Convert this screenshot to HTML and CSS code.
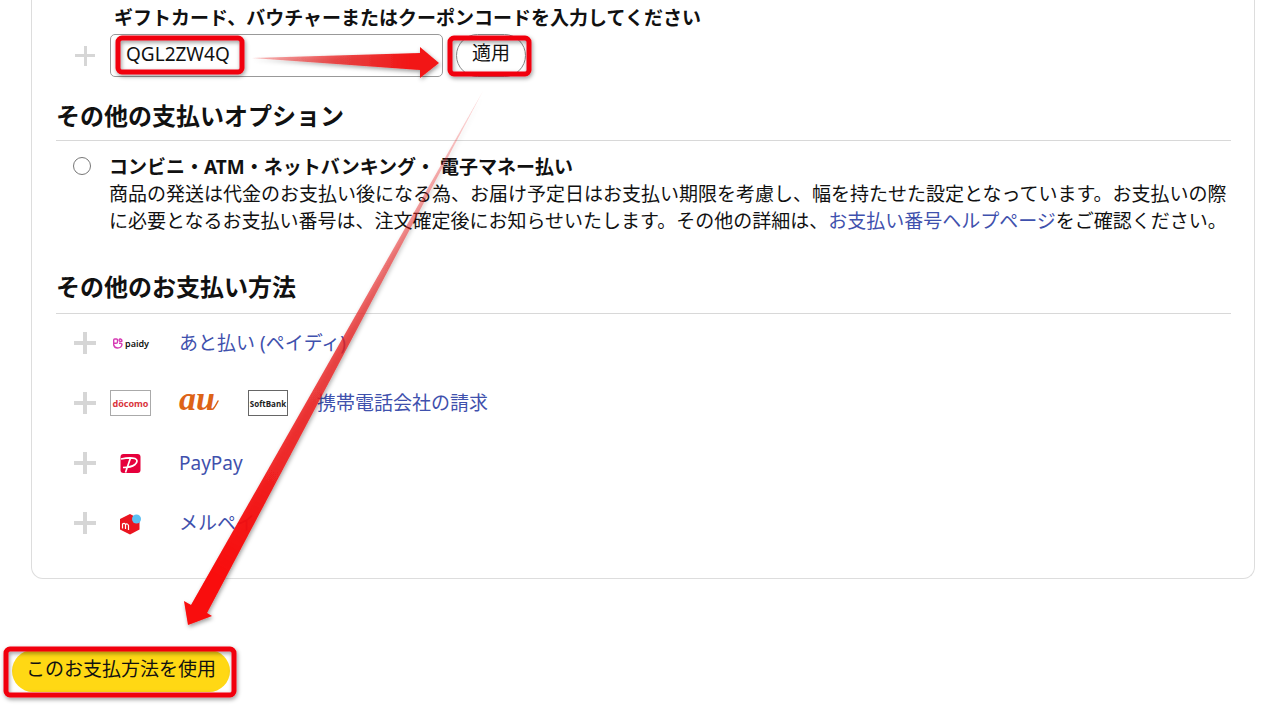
FILE: index.html
```html
<!DOCTYPE html>
<html lang="ja">
<head>
    <meta charset="UTF-8">
    <meta name="viewport" content="width=device-width, initial-scale=1.0">
    <title>お支払い方法</title>
    <link rel="stylesheet" href="styles.css">
</head>
<body>
    <main class="payment-card">
        <form class="gift-form">
            <label class="gift-label" for="gift-code">ギフトカード、バウチャーまたはクーポンコードを入力してください</label>
            <div class="gift-row">
                <span class="plus"></span>
                <input class="gift-input" type="text" id="gift-code" value="QGL2ZW4Q">
                <button class="apply-button" type="button">適用</button>
            </div>
        </form>

        <h2 class="section-title">その他の支払いオプション</h2>
        <div class="option">
            <input class="option-radio" type="radio" id="konbini" name="payment">
            <div class="option-text">
                <label class="option-name" for="konbini">コンビニ・ATM・ネットバンキング・ 電子マネー払い</label>
                <p class="option-desc">商品の発送は代金のお支払い後になる為、お届け予定日はお支払い期限を考慮し、幅を持たせた設定となっています。お支払いの際に必要となるお支払い番号は、注文確定後にお知らせいたします。その他の詳細は、<a href="#">お支払い番号ヘルプページ</a>をご確認ください。</p>
            </div>
        </div>

        <h2 class="section-title methods-title">その他のお支払い方法</h2>
        <ul class="methods">
            <li class="method">
                <span class="plus"></span>
                <svg class="logo" viewBox="0 0 41 26">
                    <g fill="none" stroke="#d63bb4" stroke-width="1.4">
                        <path d="M3.700 13V10Q3.700 9 4.700 9H6.500Q7.500 9 7.500 10V12Q7.500 13.300 6 13.300H3.700V15Q4.500 18 7.500 18Q11.500 18 12 14.500Q12 13.300 10.500 13.300H9"/>
                        <path d="M9.200 11V9.500Q9.500 8.800 10.500 9Q12 9.500 12 11Q11.500 11.700 9.200 11.200"/>
                    </g>
                    <text x="15" y="17" class="logo-paidy">paidy</text>
                </svg>
                <a href="#">あと払い (ペイディ)</a>
            </li>
            <li class="method">
                <span class="plus"></span>
                <svg class="logo" viewBox="0 0 41 26">
                    <rect x="0.500" y="0.500" width="40" height="25" fill="#fff" stroke="#aaa"/>
                    <text x="20.500" y="17" class="logo-docomo">döcomo</text>
                </svg>
                <svg class="logo" viewBox="0 0 41 26">
                    <text x="0" y="20" class="logo-au">au</text>
                    <path d="M34 19Q36 17 39 11" fill="none" stroke="#dd6317" stroke-width="1.500" stroke-linecap="round"/>
                </svg>
                <svg class="logo" viewBox="0 0 41 26">
                    <rect x="0.500" y="0.500" width="39" height="25" fill="#fff" stroke="#666"/>
                    <text x="20" y="17" class="logo-softbank">SoftBank</text>
                </svg>
                <a href="#">携帯電話会社の請求</a>
            </li>
            <li class="method">
                <span class="plus"></span>
                <svg class="logo" viewBox="0 0 41 26">
                    <rect x="10.500" y="4" width="20" height="19" rx="3" fill="#e6003c"/>
                    <path d="M11 9Q20 7 25 8.500Q29 10.500 25 14.500Q21 17.500 13 17.500M20.500 8L15.500 22.500" fill="none" stroke="#fff" stroke-width="1.700"/>
                </svg>
                <a href="#">PayPay</a>
            </li>
            <li class="method">
                <span class="plus"></span>
                <svg class="logo" viewBox="0 0 41 26">
                    <path d="M20 4L29.500 9V19.500L20 24.500L10 19.500V9Z" fill="#ea1420"/>
                    <circle cx="26.500" cy="9" r="4.500" fill="#5cc0f2"/>
                    <path d="M12.500 18.500V14Q14.500 12.500 15.500 14.500V19M15.500 14.500Q17.500 13 18.500 15.500V20" fill="none" stroke="#fff" stroke-width="1.200"/>
                </svg>
                <a href="#">メルペイ</a>
            </li>
        </ul>
    </main>

    <button class="use-button" type="button">このお支払方法を使用</button>

    <!-- Step annotations over the form -->
    <svg class="annotations" width="560" height="722" viewBox="0 0 560 722">
        <defs>
            <linearGradient id="fade-right" gradientUnits="userSpaceOnUse" x1="250" y1="58" x2="410" y2="62">
                <stop offset="0" stop-color="#e82c2c" stop-opacity="0.300"/>
                <stop offset="0.600" stop-color="#ea2828" stop-opacity="0.850"/>
                <stop offset="1" stop-color="#f21414"/>
            </linearGradient>
            <linearGradient id="fade-down" gradientUnits="userSpaceOnUse" x1="483" y1="91" x2="215" y2="575">
                <stop offset="0" stop-color="#e82020" stop-opacity="0.150"/>
                <stop offset="0.500" stop-color="#e82424" stop-opacity="0.750"/>
                <stop offset="1" stop-color="#f90808"/>
            </linearGradient>
            <filter id="shadow" filterUnits="userSpaceOnUse" x="0" y="0" width="560" height="722">
                <feDropShadow dx="1" dy="2" stdDeviation="2" flood-color="#000" flood-opacity="0.400"/>
            </filter>
        </defs>
        <g filter="url(#shadow)">
            <g fill="none" stroke="#f10510" stroke-width="5">
                <rect x="118" y="38" width="124" height="34" rx="4"/>
                <rect x="450" y="38" width="79" height="36" rx="4"/>
                <rect x="6" y="649" width="228" height="46" rx="4"/>
            </g>
            <path d="M252 58L420 53V47L439 63L420 78V70Z" fill="url(#fade-right)"/>
            <path d="M483 91L207 613L212 616L188 625L184 601L191 605Z" fill="url(#fade-down)"/>
        </g>
    </svg>
</body>
</html>
```

FILE: styles.css
```css
* {
    box-sizing: border-box;
}
body {
    position: relative;
    margin: 0;
    background-color: #fff;
    color: #111;
    font-family: "Noto Sans", "Noto Sans CJK JP", sans-serif;
    font-size: 19px;
    line-height: 27px;
}
a {
    color: #3f51ad;
    text-decoration: none;
}
.payment-card {
    margin: 0 25px 0 31px;
    padding: 5px 23px 39px 24px;
    border: 1px solid #ddd;
    border-top: none;
    border-radius: 0 0 12px 12px;
}
.gift-label {
    display: block;
    margin-left: 58px;
    font-weight: bold;
}
.gift-row {
    display: flex;
    align-items: center;
    margin-top: 2px;
    padding-left: 18px;
}
.plus {
    flex: none;
    width: 22px;
    height: 22px;
    margin-right: 14px;
    background:
        linear-gradient(#d6d6d6, #d6d6d6) center / 22px 4px no-repeat,
        linear-gradient(#d6d6d6, #d6d6d6) center / 4px 22px no-repeat;
}
.gift-row .plus {
    background-size: 20px 3px, 3px 20px;
}
.gift-input {
    width: 333px;
    height: 43px;
    padding: 0 15px 4px;
    border: 1px solid #999;
    border-radius: 5px;
    color: #111;
    font: inherit;
}
.apply-button {
    height: 43px;
    margin-left: 13px;
    padding: 0 15px 4px;
    border: 1px solid #888;
    border-radius: 22px;
    background-color: #fff;
    color: #111;
    font: inherit;
}
.section-title {
    margin: 23px 0 0;
    padding-bottom: 8px;
    border-bottom: 1px solid #d8d8d8;
    font-size: 24px;
    line-height: 32px;
}
.option {
    display: flex;
    align-items: flex-start;
    padding: 13px 0 0 17px;
}
.option-radio {
    appearance: none;
    flex: none;
    width: 18px;
    height: 18px;
    margin: 3px 18px 0 0;
    border: 1px solid #777;
    border-radius: 50%;
}
.option-name {
    display: block;
    font-weight: bold;
}
.option-desc {
    margin: 0;
}
.methods-title {
    margin-top: 36px;
    padding-bottom: 10px;
}
.methods {
    display: flex;
    flex-direction: column;
    gap: 28px;
    margin: 0;
    padding: 13px 0 0 18px;
    list-style: none;
}
.method {
    display: flex;
    align-items: center;
    height: 32px;
}
.logo {
    flex: none;
    width: 41px;
    height: 26px;
    margin-right: 28px;
    overflow: visible;
}
.logo-paidy {
    fill: #111;
    font: 600 9px "Noto Sans", sans-serif;
}
.logo-docomo {
    fill: #d9343c;
    font: bold 9px "Noto Sans", sans-serif;
    text-anchor: middle;
}
.logo-au {
    fill: #dd6317;
    font: italic bold 34px "Liberation Serif", serif;
}
.logo-softbank {
    fill: #222;
    font: bold 8px "Open Sans", sans-serif;
    text-anchor: middle;
}
.use-button {
    display: block;
    height: 42px;
    margin: 71px 0 30px 12px;
    padding: 0 14px 4px;
    border: none;
    border-radius: 21px;
    background-color: #ffd814;
    color: #111;
    font: inherit;
}
.annotations {
    position: absolute;
    top: 0;
    left: 0;
    pointer-events: none;
}
```
